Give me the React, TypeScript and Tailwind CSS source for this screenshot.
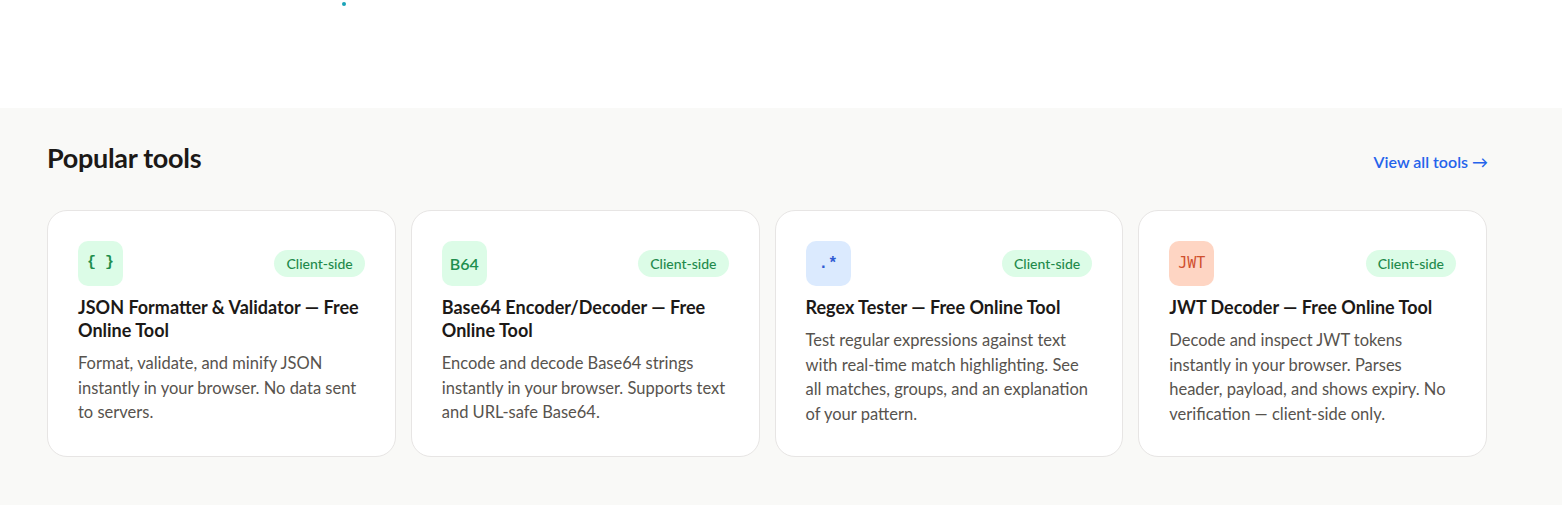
import React from "react";

const tools = [
  {
    icon: "{ }",
    iconCls: "bg-[#dcfce7] text-[#1f8f4e] font-['Liberation_Mono',monospace] text-[15px] font-bold",
    title: "JSON Formatter & Validator — Free Online Tool",
    desc: "Format, validate, and minify JSON instantly in your browser. No data sent to servers.",
  },
  {
    icon: "B64",
    iconCls: "bg-[#dcfce7] text-[#1f8f4e] text-[16px] font-semibold",
    title: "Base64 Encoder/Decoder — Free Online Tool",
    desc: "Encode and decode Base64 strings instantly in your browser. Supports text and URL-safe Base64.",
  },
  {
    icon: ".*",
    iconCls: "bg-[#dbeafe] text-[#2f5bd3] font-['Liberation_Mono',monospace] text-[16px] font-bold",
    title: "Regex Tester — Free Online Tool",
    desc: "Test regular expressions against text with real-time match highlighting. See all matches, groups, and an explanation of your pattern.",
  },
  {
    icon: "JWT",
    iconCls: "bg-[#fed5c3] text-[#d0502f] font-['DejaVu_Sans_Mono',monospace] text-[15px]",
    title: "JWT Decoder — Free Online Tool",
    desc: "Decode and inspect JWT tokens instantly in your browser. Parses header, payload, and shows expiry. No verification — client-side only.",
  },
];

export default function App() {
  return (
    <div className="w-[1562px] h-[505px] overflow-hidden bg-white font-['Lato','Noto_Sans',sans-serif]">
      <div className="relative h-[108px] bg-white">
        <span className="absolute left-[342px] top-[2px] w-[4px] h-[4px] rounded-full bg-[#1aa3b8]" />
      </div>
      <section className="h-[397px] bg-[#f9f9f7] pl-[47px] pt-[28px]">
        <div className="w-[1440px]">
          <div className="flex items-center justify-between h-[44px]">
            <h2 className="text-[27px] leading-[32px] font-bold text-[#1c1917] tracking-[-0.3px]">Popular tools</h2>
            <a className="text-[16px] font-semibold text-[#2563eb] mt-[7px] mr-[-1px]">View all tools →</a>
          </div>
          <div className="grid grid-cols-4 gap-[15px] mt-[30px]">
            {tools.map((t) => (
              <div
                key={t.title}
                className="h-[247px] rounded-[20px] border border-[#e7e5e4] bg-white px-[30px] pt-[30px]"
              >
                <div className="flex items-center justify-between">
                  <div className={`w-[45px] h-[45px] rounded-[10px] flex items-center justify-center ${t.iconCls}`}>
                    {t.icon}
                  </div>
                  <span className="h-[27px] px-[12px] rounded-full bg-[#dcfce7] text-[#1f8a4c] text-[14px] font-medium flex items-center">
                    Client-side
                  </span>
                </div>
                <h3 className="mt-[10px] text-[18px] leading-[23px] font-bold text-[#1c1917]">{t.title}</h3>
                <p className="mt-[9px] text-[16.5px] leading-[24.5px] text-[#57534e]">{t.desc}</p>
              </div>
            ))}
          </div>
        </div>
      </section>
    </div>
  );
}
